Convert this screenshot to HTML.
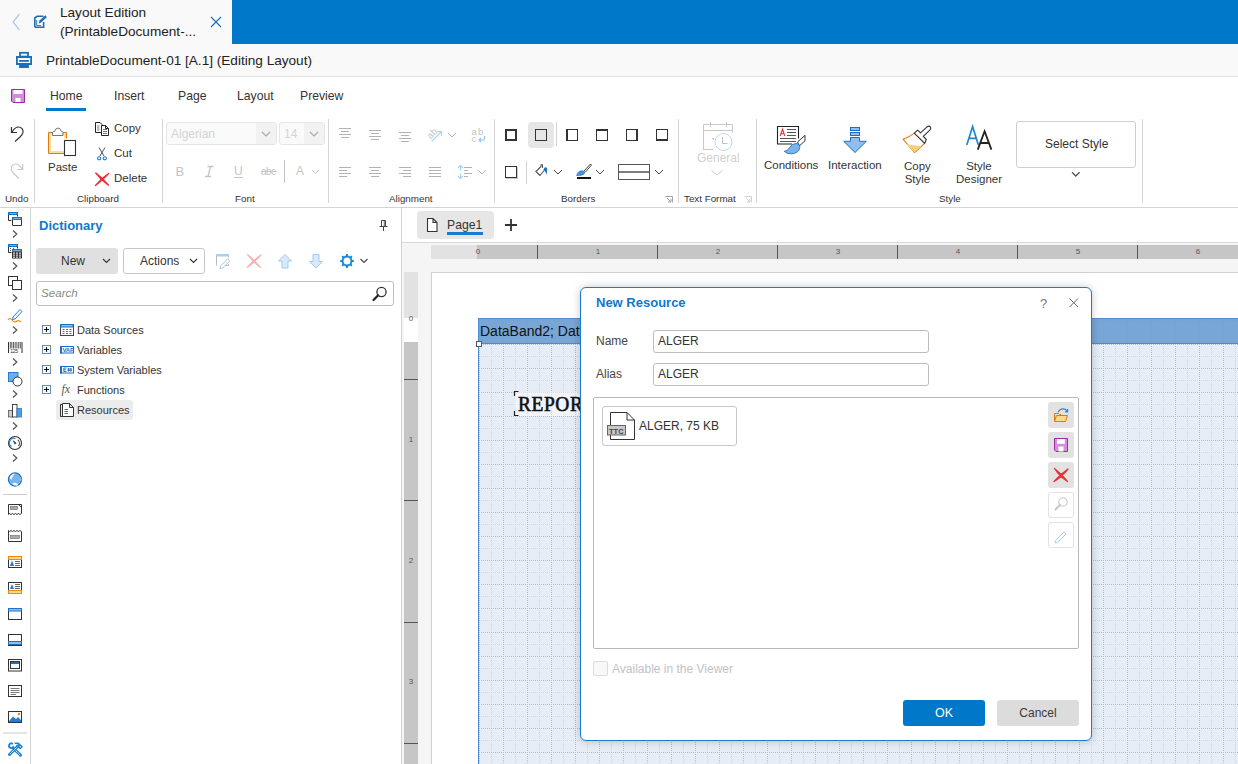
<!DOCTYPE html>
<html><head><meta charset="utf-8">
<style>
*{box-sizing:border-box;margin:0;padding:0}
html,body{width:1238px;height:764px;overflow:hidden;background:#fff;font-family:"Liberation Sans",sans-serif;color:#333}
.a{position:absolute}
svg{position:absolute;overflow:visible}
.t{position:absolute;white-space:nowrap;line-height:1}
.vs{position:absolute;width:1px;background:#d4d4d4}
.gl{position:absolute;top:193px;font-size:9.8px;color:#333;white-space:nowrap;line-height:11px}
</style></head><body>
<!-- top tab bar -->
<div class="a" style="left:0;top:0;width:1238px;height:44px;background:#f9f9f9"></div>
<div class="a" style="left:232px;top:0;width:1006px;height:44px;background:#0078c9"></div>
<!-- back chevron -->
<svg style="left:0;top:0" width="40" height="44"><path d="M19.5 14 L13 22 L19.5 30" fill="none" stroke="#a9cbe8" stroke-width="1.2"/></svg>
<!-- edit icon -->
<svg style="left:0;top:0" width="60" height="44"><path d="M34.8 27.3 V18 L37 16.3 H43.5" fill="none" stroke="#1a6fb5" stroke-width="1.6"/><path d="M34.8 27.3 H43.6 V22" fill="none" stroke="#1a6fb5" stroke-width="1.6"/><path d="M36.7 20 V25.5 H41" fill="none" stroke="#1a6fb5" stroke-width="0.9"/><path d="M38.8 23.5 L39.5 20.5 L45.5 15.3 L46.8 17.3 L40.8 22.8 Z" fill="#1a6fb5"/></svg>
<div class="t" style="left:60px;top:3px;font-size:13.6px;line-height:19px;color:#222">Layout Edition<br>(PrintableDocument-...</div>
<svg style="left:0;top:0" width="232" height="44"><path d="M211 17 L221 27 M221 17 L211 27" stroke="#1a72b8" stroke-width="1.2"/></svg>

<!-- title row -->
<div class="a" style="left:0;top:44px;width:1238px;height:33px;background:#f9f9f9;border-bottom:1px solid #e2e2e2"></div>
<svg style="left:0;top:0" width="40" height="76"><rect x="20" y="52.8" width="8" height="3.8" fill="none" stroke="#1a6fb5" stroke-width="1.8"/><path d="M16 56 H32 V65 H16 Z M17.8 58 V63 H30.2 V58 Z" fill="#1a6fb5" fill-rule="evenodd"/><rect x="19.2" y="60" width="9.7" height="1.8" fill="#1a6fb5"/><rect x="19.1" y="64.5" width="9.8" height="3.5" fill="#1a6fb5"/></svg>
<div class="t" style="left:46px;top:54px;font-size:13.6px;color:#222">PrintableDocument-01 [A.1] (Editing Layout)</div>

<!-- ribbon tabs -->
<svg style="left:11px;top:89px" width="14" height="14"><path d="M0.5 0.5 H13.5 V13.5 H2 L0.5 12 Z" fill="#cf8ed8" stroke="#9b2aa8" stroke-width="1"/><rect x="2.5" y="1" width="9" height="4" fill="#fff"/><rect x="4.5" y="9" width="5" height="4" fill="#fff"/></svg>
<div class="t" style="left:50px;top:90px;font-size:12.2px;color:#333">Home</div>
<div class="a" style="left:46px;top:108px;width:40px;height:3px;background:#0078c9"></div>
<div class="t" style="left:114px;top:90px;font-size:12.2px;color:#333">Insert</div>
<div class="t" style="left:178px;top:90px;font-size:12.2px;color:#333">Page</div>
<div class="t" style="left:237px;top:90px;font-size:12.2px;color:#333">Layout</div>
<div class="t" style="left:300px;top:90px;font-size:12.2px;color:#333">Preview</div>

<!-- ribbon body -->
<div class="a" style="left:0;top:207px;width:1238px;height:1px;background:#d4d4d4"></div>
<div class="vs" style="left:34px;top:119px;height:84px"></div>
<div class="vs" style="left:162px;top:119px;height:84px"></div>
<div class="vs" style="left:328px;top:119px;height:84px"></div>
<div class="vs" style="left:494px;top:119px;height:84px"></div>
<div class="vs" style="left:678px;top:119px;height:84px"></div>
<div class="vs" style="left:756px;top:119px;height:84px"></div>
<div class="vs" style="left:1142px;top:119px;height:84px"></div>
<div class="gl" style="left:5px">Undo</div>
<div class="gl" style="left:77px">Clipboard</div>
<div class="gl" style="left:235px">Font</div>
<div class="gl" style="left:389px">Alignment</div>
<div class="gl" style="left:561px">Borders</div>
<div class="gl" style="left:684px">Text Format</div>
<div class="gl" style="left:939px">Style</div>


<!-- undo/redo -->
<svg style="left:0;top:0" width="34" height="200"><path d="M11.5 127 V132.5 H17" fill="none" stroke="#333" stroke-width="1.2"/><path d="M12 132.2 C14 128.5 16.5 126.8 19 127 C21.8 127.3 23.5 129.8 23 132.5 C22.7 134.2 21.5 135.5 20 137 L15 141.5" fill="none" stroke="#333" stroke-width="1.2"/>
<path d="M22.8 164 V169.5 H17.3" fill="none" stroke="#c6c6c6" stroke-width="1.1"/><path d="M22.3 169.2 C20.3 165.5 17.8 163.8 15.3 164 C12.5 164.3 10.8 166.8 11.3 169.5 C11.6 171.2 12.8 172.5 14.3 174 L19 178.5" fill="none" stroke="#c6c6c6" stroke-width="1.1"/></svg>
<!-- paste -->
<svg style="left:0;top:0" width="160" height="200">
<path d="M66.5 138.5 V132.5 H48.5 V153.5 H64" fill="none" stroke="#e07a10" stroke-width="1"/>
<path d="M65 138.5 V134 H50 V152 H64" fill="none" stroke="#fbe09a" stroke-width="2"/>
<path d="M52.5 135.5 V132 Q53 131.5 54.5 131.5 Q55.5 128 58 128 Q60.5 128 61.5 131.5 Q62.5 131.5 63 132 V135.5 Z" fill="#fff" stroke="#777" stroke-width="1"/>
<rect x="64.5" y="140.5" width="11" height="15" fill="#fff" stroke="#333" stroke-width="1.1"/>
<path d="M95.5 122.5 H100 L102 124.5 V126" fill="none" stroke="#222" stroke-width="1"/><path d="M95.5 122.5 V132.5 H101" fill="none" stroke="#222" stroke-width="1"/>
<path d="M97 126 H99.5 M97 128 H99.5 M97 130 H99.5" stroke="#555" stroke-width="0.8"/>
<path d="M101.5 125.5 H105.5 L108.5 128.5 V135.5 H101.5 Z M105.5 125.5 V128.5 H108.5" fill="#fff" stroke="#222" stroke-width="1"/>
<path d="M103 129.5 H107 M103 131.5 H107 M103 133.5 H107" stroke="#555" stroke-width="0.8"/>
<path d="M99 147.5 L104 156 M105 147.5 L100 156" stroke="#444" stroke-width="0.9"/>
<circle cx="99.2" cy="158.3" r="1.6" fill="none" stroke="#1a7bd0" stroke-width="1.1"/><circle cx="104.8" cy="158.3" r="1.6" fill="none" stroke="#1a7bd0" stroke-width="1.1"/>
<path d="M95.8 173 Q102 177.5 108.5 185.2 Q101 180 95.8 173 Z" fill="#e8323a" stroke="#e8323a" stroke-width="1.4" stroke-linejoin="round"/>
<path d="M108.6 173.5 Q101.5 178 95.5 185.5 Q102.5 180 108.6 173.5 Z" fill="#e8323a" stroke="#e8323a" stroke-width="1.4" stroke-linejoin="round"/>
</svg>
<div class="t" style="left:48px;top:162px;font-size:11.5px;color:#333">Paste</div>
<div class="t" style="left:114px;top:123px;font-size:11.5px;color:#333">Copy</div>
<div class="t" style="left:114px;top:148px;font-size:11.5px;color:#333">Cut</div>
<div class="t" style="left:114px;top:173px;font-size:11.5px;color:#333">Delete</div>
<!-- font -->
<div class="a" style="left:166px;top:122px;width:111px;height:23px;border:1px solid #e6e6e6;border-radius:3px;background:#fafafa"></div>
<div class="a" style="left:256px;top:123px;width:20px;height:21px;background:#f2f2f2;border-radius:0 2px 2px 0"></div>
<div class="t" style="left:171px;top:128px;font-size:12px;color:#d4d4d4">Algerian</div>
<svg style="left:261px;top:131px" width="10" height="6"><path d="M1 1 L5 5 L9 1" fill="none" stroke="#aaa" stroke-width="1.2"/></svg>
<div class="a" style="left:279px;top:122px;width:46px;height:23px;border:1px solid #e6e6e6;border-radius:3px;background:#fafafa"></div>
<div class="a" style="left:304px;top:123px;width:20px;height:21px;background:#f2f2f2;border-radius:0 2px 2px 0"></div>
<div class="t" style="left:284px;top:128px;font-size:12px;color:#d4d4d4">14</div>
<svg style="left:309px;top:131px" width="10" height="6"><path d="M1 1 L5 5 L9 1" fill="none" stroke="#aaa" stroke-width="1.2"/></svg>
<div class="t" style="left:175.5px;top:165px;font-size:13px;color:#c4c4c4">B</div>
<svg style="left:0;top:0" width="230" height="190"><path d="M207.5 166.5 H213.5 M205 176.5 H211 M210.5 166.5 L208 176.5" fill="none" stroke="#c4c4c4" stroke-width="1.3"/></svg>
<div class="t" style="left:234px;top:165px;font-size:12px;color:#c4c4c4">U</div>
<div class="a" style="left:234px;top:177px;width:9px;height:1px;background:#c4c4c4"></div>
<div class="t" style="left:261px;top:166px;font-size:11px;color:#c4c4c4;letter-spacing:-0.6px;transform:scaleX(0.9);transform-origin:left">abc</div>
<div class="a" style="left:261px;top:171px;width:16px;height:1px;background:#c4c4c4"></div>
<div class="a" style="left:284px;top:160px;width:1px;height:23px;background:#c4c4c4"></div>
<div class="t" style="left:296px;top:165px;font-size:12px;color:#c4c4c4">A</div>
<svg style="left:311px;top:169px" width="10" height="6"><path d="M1 1 L4.5 4.5 L8 1" fill="none" stroke="#c4c4c4" stroke-width="1"/></svg>
<!-- alignment -->
<svg style="left:0;top:0" width="500" height="200">
<g stroke="#b2b2b2" stroke-width="1">
<path d="M339 128.5 H351 M341 131.5 H349 M339 134.5 H351 M341 137.5 H349"/>
<path d="M369 130.5 H381 M371 133.5 H379 M369 136.5 H381 M371 139.5 H379"/>
<path d="M399 132.5 H411 M401 135.5 H409 M399 138.5 H411 M401 141.5 H409"/>
<path d="M339 167.5 H351 M339 170.5 H347 M339 173.5 H351 M339 176.5 H347"/>
<path d="M369 167.5 H381 M371 170.5 H379 M369 173.5 H381 M371 176.5 H379"/>
<path d="M399 167.5 H411 M403 170.5 H411 M399 173.5 H411 M403 176.5 H411"/>
<path d="M429 167.5 H441 M429 170.5 H441 M429 173.5 H441 M429 176.5 H441"/>
<path d="M464 167.5 H472 M464 170.5 H468 M464 173.5 H472 M464 176.5 H468"/>
<path d="M448 133 L452 137 L456 133 M478 170 L482 174 L486 170" fill="none"/>
</g>
<path d="M431.5 141.5 L441.5 131.5 M437 131.5 H441.5 V136" fill="none" stroke="#a8d2f0" stroke-width="1.1"/>
<text x="0" y="0" font-size="9.5" fill="#c4c4c4" font-family="Liberation Sans" transform="translate(430.5 139.5) rotate(-45)">ab</text>
<text x="471.5" y="134.5" font-size="9.5" fill="#c4c4c4" font-family="Liberation Sans" letter-spacing="1.2">ab</text>
<text x="471.5" y="142" font-size="9.5" fill="#c4c4c4" font-family="Liberation Sans">c</text>
<path d="M484.5 136 V138.5 Q484.5 140 483 140 H479 M481 138 L479 140 L481 142" fill="none" stroke="#8cc4ee" stroke-width="1.1"/>
<path d="M460.5 166 V171 M458 168 L460.5 165.5 L463 168 M460.5 173.5 V178.5 M458 176 L460.5 178.5 L463 176" fill="none" stroke="#a8d2f0" stroke-width="1.1"/>
</svg>
<!-- borders -->
<div class="a" style="left:528px;top:122px;width:26px;height:26px;background:#e6e6e6;border-radius:4px"></div>
<div class="a" style="left:556px;top:122px;width:1px;height:24px;background:#d0d0d0"></div>
<div class="a" style="left:526px;top:161px;width:1px;height:23px;background:#d0d0d0"></div>
<svg style="left:0;top:0" width="700" height="200">
<g fill="none" stroke="#333">

<rect x="618.5" y="164.5" width="31" height="15" stroke-width="1" stroke="#555"/><path d="M618 172 H650" stroke-width="1.5" stroke="#555"/>
<path d="M554 170 L558 174 L562 170 M596 170 L600 174 L604 170 M655 170 L659 174 L663 170" stroke="#444" stroke-width="1"/>

</g>
<path d="M536 171.5 L541 166.5 M541 166.5 V164.8 H542.5 V168 M544.5 170 L540 175.5 L535.5 171" fill="none" stroke="#555" stroke-width="1.1" stroke-linejoin="round"/>
<path d="M543.5 169.5 Q544.5 166.5 546.5 167.5 Q547.8 168.5 547 171 L546.5 175 Q545.5 171 543.5 169.5 Z" fill="#1a6fc0"/>
<rect x="577" y="177" width="14" height="2" fill="#111"/>
<path d="M584 171 L590.5 164 L591.5 165 L585.5 172" fill="#fff" stroke="#444" stroke-width="1"/>
<path d="M576.5 175.5 Q577.5 172 580 171 Q583 170 585 172 Q584.5 175 580.5 175.5 Z" fill="#4a90e2" stroke="#2a70c0" stroke-width="0.6"/>
<path d="M665.5 196.5 H672.5 V202.5 M667 198 L671 202 M668 202 H671 V199" fill="none" stroke="#999" stroke-width="0.9"/>
<path d="M744.5 196.5 H751.5 V202.5 M746 198 L750 202 M747 202 H750 V199" fill="none" stroke="#ccc" stroke-width="0.9"/>
</svg>
<div class="a" style="left:505px;top:129px;width:12px;height:12px;border:2px solid #333"></div>
<div class="a" style="left:535px;top:129px;width:12px;height:12px;border:1px solid #333;border-width:1.5px"></div>
<div class="a" style="left:566px;top:129px;width:12px;height:12px;border:1px solid #333;border-left-width:2px"></div>
<div class="a" style="left:596px;top:129px;width:12px;height:12px;border:1px solid #333;border-top-width:2px"></div>
<div class="a" style="left:626px;top:129px;width:12px;height:12px;border:1px solid #333;border-right-width:2px"></div>
<div class="a" style="left:656px;top:129px;width:12px;height:12px;border:1px solid #333;border-bottom-width:2px"></div>
<div class="a" style="left:505px;top:166px;width:12px;height:12px;border:1px solid #333;box-shadow:1px 1px 0 #ccc"></div>
<!-- text format -->
<svg style="left:0;top:0" width="760" height="200">
<g fill="none" stroke="#c8c8c8" stroke-width="1">
<path d="M703.5 150 V124.5 H732.5 V133"/><path d="M703.5 130.5 H732.5"/><path d="M710.5 122 V127 M726.5 122 V127"/><path d="M703.5 149.5 H713"/>
</g>
<circle cx="723.5" cy="142" r="8.5" fill="#fff" stroke="#b8daf4" stroke-width="1"/>
<path d="M722.5 137 V143.5 H727.5" fill="none" stroke="#c0c0c0" stroke-width="1"/>
<rect x="712.5" y="138" width="1.3" height="1.3" fill="#999"/>
<path d="M711.5 170.5 L717 175 L722.5 170.5" fill="none" stroke="#ccc" stroke-width="1"/>
</svg>
<div class="t" style="left:697px;top:152px;font-size:12px;color:#d0d0d0">General</div>
<!-- style group -->
<svg style="left:0;top:0" width="1000" height="200">
<path d="M798.5 138.5 V126.5 H777.5 V144 H792" fill="#fff" stroke="#222" stroke-width="1.1"/>
<path d="M780.2 136 L782.5 129.3 L784.8 136 M781 133.8 H784" fill="none" stroke="#e8323a" stroke-width="1.1"/>
<path d="M787 129.5 H796 M787 132.5 H796 M787 135.5 H796 M780 138.5 H796 M780 141.5 H796" stroke="#555" stroke-width="1"/>
<path d="M797.5 142 L805 135.3 V140.8 L799.5 145.8 Z" fill="#fff" stroke="#333" stroke-width="1"/>
<path d="M784.2 151.3 Q787.5 151.5 789.5 147.5 Q792 143.5 796 143.5 Q800 144 799.8 147.5 Q799 153.5 791 153.8 Q786.5 153.8 784.2 151.3 Z" fill="#7ab4ea" stroke="#2a70c2" stroke-width="0.9"/>
<rect x="850.5" y="127.5" width="9" height="3" fill="#8cc0f0" stroke="#1a6fc0" stroke-width="1"/>
<rect x="850.5" y="132.5" width="9" height="3" fill="#8cc0f0" stroke="#1a6fc0" stroke-width="1"/>
<path d="M850.5 137.5 H859.5 V141.3 H866.3 L855 152.5 L843.7 141.3 H850.5 Z" fill="#8cc0f0" stroke="#1a6fc0" stroke-width="1"/>
<path d="M914.3 133.1 Q909 137.5 903 139.2 L914.5 152.5 L924.7 143.3 Z" fill="#fff" stroke="#e07a10" stroke-width="1.1" stroke-linejoin="round"/>
<path d="M906.5 144.2 Q914 145 921.5 146.3 L914.5 152.3 Z" fill="#f8d27a"/>
<path d="M914.3 133.1 L917.6 130.1 L920.5 132.8 L927 126.8 Q929 125.3 930.6 127.2 Q931.3 128.8 929.8 130.2 L923.3 136.3 L926.3 139.5 L924.7 143.3 Z" fill="#fff" stroke="#333" stroke-width="1.1" stroke-linejoin="round"/>
<path d="M966.8 145 L972.6 126.5 L978.4 145 M969 138.3 H976.2" fill="none" stroke="#1f86d4" stroke-width="1.7"/>
<path d="M977.8 149.6 L984.6 131.3 L991.4 149.6 M980.3 143 H989" fill="none" stroke="#222" stroke-width="1.8"/>
<path d="M1072 172.3 L1075.8 176 L1079.6 172.3" fill="none" stroke="#555" stroke-width="1.3"/>
</svg>
<div class="t" style="left:764px;top:160px;font-size:11.5px;color:#333">Conditions</div>
<div class="t" style="left:828px;top:160px;font-size:11.5px;color:#333">Interaction</div>
<div class="t" style="left:904px;top:160px;font-size:11.5px;color:#333;text-align:center;line-height:13px">Copy<br>Style</div>
<div class="t" style="left:956px;top:160px;font-size:11.5px;color:#333;text-align:center;width:46px;line-height:13px">Style<br>Designer</div>
<div class="a" style="left:1016px;top:121px;width:120px;height:47px;border:1px solid #cfcfcf;border-radius:3px"></div>
<div class="t" style="left:1045px;top:138px;font-size:12px;color:#333">Select Style</div>


<!-- left toolbar -->
<div class="a" style="left:30px;top:208px;width:1px;height:556px;background:#d4d4d4"></div>
<svg style="left:0;top:0" width="31" height="764">
<g fill="none" stroke="#444" stroke-width="1">
<path d="M13 230.5 L16.8 234 L13 237.5 M13 262.5 L16.8 266 L13 269.5 M13 294.5 L16.8 298 L13 301.5 M13 326.5 L16.8 330 L13 333.5 M13 358.5 L16.8 362 L13 365.5 M13 390.5 L16.8 394 L13 397.5 M13 422.5 L16.8 426 L13 429.5 M13 454.5 L16.8 458 L13 461.5" fill="none" stroke="#555" stroke-width="1.2"/>
</g>
<!-- 1 windows -->
<rect x="8" y="212" width="10" height="3" fill="#1a72c4"/><rect x="9.5" y="213.1" width="7" height="0.8" fill="#8cc0ee"/>
<path d="M8.5 215 V220.5 H11.5 M17.5 215 V216.5" fill="none" stroke="#333" stroke-width="1"/>
<rect x="12" y="217" width="10" height="3" fill="#1a72c4"/><rect x="13.5" y="218.1" width="7" height="0.8" fill="#8cc0ee"/>
<path d="M12.5 220 V225.5 H21.5 V220" fill="none" stroke="#333" stroke-width="1"/>
<!-- 2 -->
<rect x="8" y="244" width="10" height="3" fill="#1a72c4"/><rect x="9.5" y="245.1" width="7" height="0.8" fill="#8cc0ee"/>
<path d="M8.5 247 V252.5 H11.5 M17.5 247 V248.5" fill="none" stroke="#333" stroke-width="1"/><rect x="10" y="248" width="1" height="1" fill="#555"/><rect x="13" y="248" width="1" height="1" fill="#555"/><rect x="10" y="250" width="1" height="1" fill="#555"/>
<rect x="12" y="249" width="10" height="3" fill="#1a72c4"/><rect x="13.5" y="250.1" width="7" height="0.8" fill="#8cc0ee"/>
<rect x="12" y="252" width="10" height="6.5" fill="#333"/>
<rect x="13" y="252.6" width="2" height="1" fill="#fff"/><rect x="16" y="252.6" width="2" height="1" fill="#fff"/><rect x="19" y="252.6" width="2" height="1" fill="#fff"/><rect x="13" y="254.6" width="2" height="1" fill="#fff"/><rect x="16" y="254.6" width="2" height="1" fill="#fff"/><rect x="19" y="254.6" width="2" height="1" fill="#fff"/><rect x="13" y="256.6" width="2" height="1" fill="#fff"/><rect x="16" y="256.6" width="2" height="1" fill="#fff"/><rect x="19" y="256.6" width="2" height="1" fill="#fff"/>
<!-- 3 -->
<rect x="8.5" y="276.5" width="9" height="9" fill="#fff" stroke="#333"/><rect x="12.5" y="280.5" width="9" height="9" fill="#fff" stroke="#333"/>
<!-- 4 pen -->
<path d="M13 317 L20 309.5 L22 311.5 L15 319 L12.5 319.5 Z" fill="#fff" stroke="#2a7bd0" stroke-width="1"/>
<path d="M8 320 Q10 317 12 320 Q14 323 17 321 Q19 320 21 322" fill="none" stroke="#e8891a" stroke-width="1.2"/>
<!-- 5 barcode -->
<path d="M8.5 342 V353 M22 342 V353" stroke="#333" stroke-width="1"/>
<path d="M10.3 342 V348.5 M11.8 342 V348.5 M13.5 342 V348.5 M15.2 342 V348.5 M16.9 342 V348.5 M18.7 342 V348.5 M20.3 342 V348.5" stroke="#333" stroke-width="0.8"/>
<text x="10.2" y="353.3" font-size="5" fill="#333" font-family="Liberation Sans" letter-spacing="-0.2">125</text>
<!-- 6 shapes -->
<rect x="8.5" y="372.5" width="9.5" height="9" fill="#6aaeea" stroke="#2a7bd0" stroke-width="1"/>
<circle cx="17.5" cy="381.5" r="4.5" fill="#fff" stroke="#333" stroke-width="1"/>
<!-- 7 chart -->
<rect x="8.5" y="410.5" width="4" height="6.5" fill="#ccc" stroke="#555" stroke-width="0.8"/>
<rect x="12.5" y="404.5" width="4.5" height="12.5" fill="#fff" stroke="#333" stroke-width="0.9"/>
<rect x="17" y="408.5" width="4.5" height="8.5" fill="#4a9ee6" stroke="#2a7bd0" stroke-width="0.8"/>
<!-- 8 gauge -->
<circle cx="15" cy="443" r="6.5" fill="#fff" stroke="#333" stroke-width="1.1"/>
<path d="M11.5 446.5 A4.5 4.5 0 0 1 15.5 438.5" fill="none" stroke="#2a86d8" stroke-width="1.1"/>
<path d="M17.8 439.8 A4.5 4.5 0 0 1 18.5 446" fill="none" stroke="#444" stroke-width="1.1"/>
<path d="M13.3 440.8 L16.2 443 L15 444.2 Z" fill="#333" stroke="#333" stroke-width="0.6"/>
<!-- 9 globe -->
<circle cx="15" cy="479.5" r="6.6" fill="#7ab4ea" stroke="#1a6fc0" stroke-width="1.1"/>
<path d="M9.6 477.5 Q11 474 15 473.3 Q12.5 476 11.5 479.5 Q10 479.5 9.6 477.5 Z" fill="#fff" opacity="0.9"/>
<path d="M12 483.5 Q15 482 17.5 484 Q19 485.5 16.5 485.8 Q13.5 485.8 12 483.5 Z" fill="#fff" opacity="0.9"/>
<path d="M20.8 477 Q21.8 479 21.2 481.5 Q20 479.5 20.8 477 Z" fill="#fff" opacity="0.8"/>
<path d="M3 494.5 H27" stroke="#ccc" stroke-width="1"/>
<!-- bands -->
<g fill="#fff" stroke="#333" stroke-width="1">
<path d="M8.5 504.5 H21.5 V513.5 L20 514.5 L18.5 513.5 L17 514.5 L15.5 513.5 L14 514.5 L12.5 513.5 L11 514.5 L9.5 513.5 L8.5 514.5 Z"/>
<rect x="10.5" y="506.5" width="7" height="3" fill="#aaa" stroke="#666" stroke-width="0.6"/><path d="M18.5 504.5 L21.5 507.5" stroke="#333" stroke-width="1"/>
<path d="M8.5 530.5 L9.5 531.5 L11 530.5 L12.5 531.5 L14 530.5 L15.5 531.5 L17 530.5 L18.5 531.5 L20 530.5 L21.5 531.5 V541.5 H8.5 Z"/>
<rect x="10.5" y="535.5" width="9" height="3" fill="#aaa" stroke="#666" stroke-width="0.6"/>
<rect x="8.5" y="556.5" width="13" height="11"/>
<rect x="8.5" y="582.5" width="13" height="11"/>
<rect x="8.5" y="608.5" width="13" height="11"/>
<rect x="8.5" y="634.5" width="13" height="11"/>
<rect x="8.5" y="659.5" width="13" height="11.5"/>
<rect x="8.5" y="685.5" width="13" height="11"/>
<rect x="8.5" y="711.5" width="13" height="11"/>
</g>
<rect x="8.5" y="556.5" width="13" height="3" fill="#fbd88a" stroke="#e8891a" stroke-width="1"/>
<path d="M10 565.5 L12 560.5 L14 565.5 Z" fill="#2a7bd0"/><path d="M10 565.5 H14" stroke="#2a7bd0" stroke-width="1"/>
<path d="M15 561.5 H20 M15 563.5 H20 M15 565.5 H20" stroke="#555" stroke-width="0.9"/>
<rect x="8.5" y="590.5" width="13" height="3" fill="#fbd88a" stroke="#e8891a" stroke-width="1"/>
<path d="M10 589 L12 584 L14 589 Z" fill="#2a7bd0"/>
<path d="M15 584.5 H20 M15 586.5 H20 M15 588.5 H20" stroke="#555" stroke-width="0.9"/>
<rect x="8.5" y="608.5" width="13" height="2.5" fill="#8cc0ee" stroke="#1a72c4" stroke-width="1"/>
<rect x="8.5" y="641.5" width="13" height="3" fill="#8cc0ee" stroke="#1a72c4" stroke-width="1"/>
<rect x="10.5" y="661.5" width="9" height="7" fill="#fff" stroke="#333" stroke-width="1"/><rect x="11" y="662" width="8" height="2" fill="#1a72c4"/>
<path d="M10.5 688.5 H19.5 M10.5 690.5 H19.5 M10.5 692.5 H19.5 M10.5 694.5 H16" stroke="#555" stroke-width="0.8"/>
<path d="M9 721 L13 716.5 L16 719 L18 717 L21 720 V722 H9 Z" fill="#2a7bd0"/>
<circle cx="19" cy="714" r="1.2" fill="#e8891a"/>
<path d="M3 733 H27" stroke="#ccc" stroke-width="1"/>
<g fill="none" stroke-linecap="round">
<path d="M13 748 L20.5 755.2" stroke="#1e86d0" stroke-width="3"/>
<path d="M14.5 749.5 L19.5 754.3" stroke="#fff" stroke-width="0.8" stroke-dasharray="1 1.2"/>
<path d="M12.3 743.6 A2.3 2.3 0 1 0 13.2 747" stroke="#1e86d0" stroke-width="1.8"/>
<path d="M9.5 754.5 L18.5 745.5" stroke="#1e86d0" stroke-width="3"/>
<path d="M10.5 753.5 L17.5 746.5" stroke="#fff" stroke-width="0.8" stroke-dasharray="1 1.2"/>
<path d="M15.2 743.2 H18.3 L22 746.8 L20.3 748.5 L17 745.5" stroke="#1e86d0" stroke-width="1.6" stroke-linejoin="round"/>
</g>
</svg>

<!-- dictionary panel -->
<div class="a" style="left:401px;top:208px;width:1px;height:556px;background:#d4d4d4"></div>
<div class="t" style="left:39px;top:219px;font-size:13px;font-weight:bold;color:#0f78cc">Dictionary</div>
<svg style="left:0;top:0" width="400" height="240"><path d="M381.5 220.5 H385.5 V226 M381.5 220.5 V226" fill="none" stroke="#444" stroke-width="1"/><path d="M379.5 226.5 H387.5" stroke="#444" stroke-width="1"/><path d="M383.5 226.5 V231" stroke="#444" stroke-width="1"/><path d="M384.3 221 V226" stroke="#444" stroke-width="0.8"/></svg>
<div class="a" style="left:36px;top:248px;width:82px;height:26px;background:#e0e0e0;border-radius:3px"></div>
<div class="t" style="left:61px;top:255px;font-size:12px;color:#333">New</div>
<svg style="left:102px;top:258px" width="10" height="6"><path d="M1 1 L4.5 4.5 L8 1" fill="none" stroke="#333" stroke-width="1.1"/></svg>
<div class="a" style="left:123px;top:248px;width:82px;height:26px;border:1px solid #c6c6c6;border-radius:3px;background:#fff"></div>
<div class="t" style="left:140px;top:255px;font-size:12px;color:#333">Actions</div>
<svg style="left:189px;top:258px" width="10" height="6"><path d="M1 1 L4.5 4.5 L8 1" fill="none" stroke="#333" stroke-width="1.1"/></svg>
<svg style="left:0;top:0" width="400" height="300">
<path d="M216.5 265.5 V254.5 H228.5 V257.5 M228.5 264 V265.5 H224" fill="none" stroke="#b8b8b8" stroke-width="1"/><rect x="216" y="254" width="13" height="2.5" fill="#a8d0f0"/>
<path d="M220.8 265.8 L227.8 258.8 L229.8 260.8 L222.8 267.8 L220 268.6 Z" fill="#fff" stroke="#9ccbee" stroke-width="1"/>
<path d="M247.5 254.5 Q254 260 260.5 267.5 Q253 262 247.5 254.5 Z M261 255 Q254 259.5 247.3 267.5 Q254.5 262 261 255 Z" fill="#f6b0b2" stroke="#f6b0b2" stroke-width="1.2" stroke-linejoin="round"/>
<path d="M285 254.5 L291.5 261 H288 V268 H282 V261 H278.5 Z" fill="#dbeafa" stroke="#9ccbee" stroke-width="1"/>
<path d="M316 268 L322.5 261.5 H319 V254.5 H313 V261.5 H309.5 Z" fill="#dbeafa" stroke="#9ccbee" stroke-width="1"/>
<path d="M352.39 259.93 L353.96 260.23 L353.96 261.77 L352.39 262.07 L351.57 264.06 L352.46 265.38 L351.38 266.46 L350.06 265.57 L348.07 266.39 L347.77 267.96 L346.23 267.96 L345.93 266.39 L343.94 265.57 L342.62 266.46 L341.54 265.38 L342.43 264.06 L341.61 262.07 L340.04 261.77 L340.04 260.23 L341.61 259.93 L342.43 257.94 L341.54 256.62 L342.62 255.54 L343.94 256.43 L345.93 255.61 L346.23 254.04 L347.77 254.04 L348.07 255.61 L350.06 256.43 L351.38 255.54 L352.46 256.62 L351.57 257.94 Z M350.5 261 A3.5 3.5 0 1 0 343.5 261 A3.5 3.5 0 1 0 350.5 261 Z" fill="#1e86d0" fill-rule="evenodd"/>
<path d="M360.5 259 L364 262.5 L367.5 259" fill="none" stroke="#444" stroke-width="1.1"/>
</svg>
<div class="a" style="left:36px;top:281px;width:358px;height:25px;border:1px solid #bdbdbd;border-radius:3px;background:#fff"></div>
<div class="t" style="left:41px;top:287px;font-size:11.6px;font-style:italic;color:#888">Search</div>
<svg style="left:372px;top:286px" width="16" height="16"><circle cx="9.5" cy="6" r="4.6" fill="none" stroke="#333" stroke-width="1.3"/><path d="M6.2 9.3 L1.5 14" stroke="#222" stroke-width="2.2" stroke-linecap="round"/></svg>
<!-- tree -->
<svg style="left:0;top:0" width="200" height="430">
<g fill="#fff" stroke="#6a8cb0" stroke-width="1">
<rect x="42.5" y="325.5" width="8" height="8"/><rect x="42.5" y="345.5" width="8" height="8"/><rect x="42.5" y="365.5" width="8" height="8"/><rect x="42.5" y="385.5" width="8" height="8"/>
</g>
<path d="M44 329.5 H49 M46.5 327 V332 M44 349.5 H49 M46.5 347 V352 M44 369.5 H49 M46.5 367 V372 M44 389.5 H49 M46.5 387 V392" stroke="#111" stroke-width="1.1"/>
<rect x="60.5" y="324.5" width="13" height="11" fill="#fff" stroke="#444" stroke-width="1"/><rect x="60" y="324" width="14" height="3.5" fill="#1a72c4"/><rect x="61.5" y="325" width="11" height="1.5" fill="#8cc0ee"/>
<g fill="#666"><rect x="62.5" y="329" width="2" height="1"/><rect x="66" y="329" width="2" height="1"/><rect x="69.5" y="329" width="2" height="1"/><rect x="62.5" y="331" width="2" height="1"/><rect x="66" y="331" width="2" height="1"/><rect x="69.5" y="331" width="2" height="1"/><rect x="62.5" y="333" width="2" height="1"/><rect x="66" y="333" width="2" height="1"/><rect x="69.5" y="333" width="2" height="1"/></g>
<rect x="60.5" y="346.5" width="13" height="6.5" fill="#fff" stroke="#1a6fc0" stroke-width="1"/><rect x="60" y="346" width="2" height="7.5" fill="#1a6fc0"/>
<text x="62.6" y="352.3" font-size="6" font-weight="bold" fill="#1a6fc0" font-family="Liberation Sans" letter-spacing="-0.3">VAR</text>
<rect x="60.5" y="366.5" width="13" height="6.5" fill="#fff" stroke="#1a6fc0" stroke-width="1"/><rect x="60" y="366" width="2" height="7.5" fill="#1a6fc0"/>
<path d="M66.5 368 H63.8 V371.5 H66.5 M63.8 369.8 H66 M68.5 368 V371.5 M70.8 368 V371.5 M67.5 369 H72 M67.5 370.6 H72" fill="none" stroke="#1a6fc0" stroke-width="0.9"/>
<text x="61.5" y="393" font-size="12" font-style="italic" fill="#555" font-family="Liberation Serif">fx</text>
<rect x="56" y="400" width="77" height="20" rx="3" fill="#ececec"/>
<path d="M63.5 416.5 H60.5 V404.5 H64" fill="none" stroke="#333" stroke-width="1"/>
<path d="M62.5 403.5 H69.5 L73.5 407.5 V416.5 H62.5 Z M69.5 403.5 V407.5 H73.5" fill="#fff" stroke="#333" stroke-width="1"/>
<path d="M64.5 409.5 H68 M64.5 411.5 H68 M64.5 413.5 H68" stroke="#555" stroke-width="0.9"/>
</svg>
<div class="t" style="left:77px;top:325px;font-size:11px;color:#333">Data Sources</div>
<div class="t" style="left:77px;top:345px;font-size:11px;color:#333">Variables</div>
<div class="t" style="left:77px;top:365px;font-size:11px;color:#333">System Variables</div>
<div class="t" style="left:77px;top:385px;font-size:11px;color:#333">Functions</div>
<div class="t" style="left:77px;top:405px;font-size:11px;color:#333">Resources</div>

<!-- DICT -->

<!-- canvas -->
<div class="a" style="left:402px;top:242px;width:836px;height:522px;background:#f5f5f5;border-top:1px solid #d8d8d8"></div>
<div class="a" style="left:417px;top:211px;width:77px;height:28px;background:#e6e6e6;border-radius:4px"></div>
<svg style="left:0;top:0" width="440" height="240"><path d="M427.5 218.5 H433 L437 222.5 V231.5 H427.5 Z M433 218.5 V222.5 H437" fill="#fff" stroke="#333" stroke-width="1.1"/></svg>
<div class="t" style="left:447px;top:219px;font-size:12.2px;color:#333">Page1</div>
<div class="a" style="left:447px;top:232px;width:36px;height:3px;background:#1a7bd0"></div>
<svg style="left:504px;top:218px" width="14" height="14"><path d="M7 1 V13 M1 7 H13" stroke="#333" stroke-width="1.8"/></svg>
<!-- h ruler -->
<div class="a" style="left:431px;top:245px;width:807px;height:14px;background:#c6c6c6"></div>
<div class="a" style="left:431px;top:245px;width:46px;height:14px;background:#e2e2e2"></div>
<svg style="left:0;top:0" width="1238" height="764">
<g stroke="#555" stroke-width="1"><path d="M537.5 245 V259 M657.5 245 V259 M777.5 245 V259 M897.5 245 V259 M1017.5 245 V259 M1137.5 245 V259"/></g>
<g font-size="8" fill="#555" font-family="Liberation Sans" text-anchor="middle">
<text x="478" y="254">0</text><text x="598" y="254">1</text><text x="718" y="254">2</text><text x="838" y="254">3</text><text x="958" y="254">4</text><text x="1078" y="254">5</text><text x="1198" y="254">6</text>
</g>
</svg>
<!-- v ruler -->
<div class="a" style="left:404px;top:272px;width:14px;height:492px;background:#c6c6c6"></div>
<div class="a" style="left:404px;top:272px;width:14px;height:46px;background:#e2e2e2"></div>
<div class="a" style="left:404px;top:318px;width:14px;height:24px;background:#fff"></div>
<svg style="left:0;top:0" width="1238" height="764">
<g stroke="#555" stroke-width="1"><path d="M404 379.5 H418 M404 500.5 H418 M404 622.5 H418 M404 743.5 H418"/></g>
<g font-size="8" fill="#555" font-family="Liberation Sans" text-anchor="middle">
<text x="411" y="321">0</text><text x="411" y="442">1</text><text x="411" y="563">2</text><text x="411" y="684">3</text>
</g>
</svg>
<!-- page -->
<div class="a" style="left:431px;top:272px;width:807px;height:492px;background:#fff;border-left:1px solid #d0d0d0;border-top:1px solid #d0d0d0"></div>
<svg style="left:0;top:0" width="1238" height="764">
<defs><pattern id="grid" width="24" height="24" patternUnits="userSpaceOnUse" x="491" y="356">
<path d="M0.5 0 V24 M0 0.5 H24" stroke="#cfd6e1" stroke-width="1" stroke-dasharray="1 1"/>
<path d="M12.5 0 V24 M0 12.5 H24" stroke="#b4bdca" stroke-width="1" stroke-dasharray="1 1"/>
</pattern></defs>
<rect x="478" y="318" width="760" height="446" fill="#e7edf7"/>
<rect x="479" y="318" width="759" height="446" fill="url(#grid)"/>
<rect x="478" y="318" width="760" height="26" fill="#6fa0d3" fill-opacity="0.93"/>
<path d="M478 318.5 H1238 M478 343.5 H1238" stroke="#5489c8" stroke-width="1"/>
<path d="M478.5 318 V764" stroke="#4a8ad0" stroke-width="1"/>
</svg>
<div class="t" style="left:480px;top:324px;font-size:14px;color:#111">DataBand2; Dat</div>
<div class="a" style="left:476px;top:341px;width:6px;height:6px;background:#fff;border:1px solid #555"></div>
<div class="a" style="left:515px;top:392px;width:70px;height:24px;background:rgba(255,255,255,0.45)"></div>
<div class="t" style="left:518px;top:394px;font-size:20px;font-weight:normal;color:#111;font-family:'Liberation Serif',serif;letter-spacing:0.6px;transform:scaleX(0.97);-webkit-text-stroke:0.6px #111;transform-origin:left">REPORT</div>
<svg style="left:0;top:0" width="1238" height="764"><path d="M518.5 391.5 H514.5 V396 M514.5 411 V415.5 H518.5" fill="none" stroke="#222" stroke-width="1.2"/></svg>

<!-- dialog -->
<div class="a" style="left:580px;top:287px;width:512px;height:454px;background:#fff;border:1px solid #1a7bd0;border-radius:6px;box-shadow:0 0 8px rgba(0,0,0,0.22)"></div>
<div class="t" style="left:596px;top:296px;font-size:13px;font-weight:bold;color:#0f78cc">New Resource</div>
<div class="t" style="left:1040px;top:297px;font-size:13px;color:#777">?</div>
<svg style="left:0;top:0" width="1238" height="764"><path d="M1069.5 298.5 L1078 307 M1078 298.5 L1069.5 307" stroke="#666" stroke-width="1"/></svg>
<div class="t" style="left:596px;top:335px;font-size:12px;color:#444">Name</div>
<div class="a" style="left:653px;top:330px;width:276px;height:23px;border:1px solid #bdbdbd;border-radius:3px"></div>
<div class="t" style="left:658px;top:335px;font-size:12px;color:#333">ALGER</div>
<div class="t" style="left:596px;top:368px;font-size:12px;color:#444">Alias</div>
<div class="a" style="left:653px;top:363px;width:276px;height:23px;border:1px solid #bdbdbd;border-radius:3px"></div>
<div class="t" style="left:658px;top:368px;font-size:12px;color:#333">ALGER</div>
<div class="a" style="left:593px;top:397px;width:486px;height:252px;border:1px solid #b8b8b8;border-radius:2px"></div>
<div class="a" style="left:602px;top:406px;width:135px;height:40px;border:1px solid #c8c8c8;border-radius:3px"></div>
<svg style="left:0;top:0" width="1238" height="764">
<path d="M610.5 412.5 H627 L634.5 420 V439.5 H610.5 Z M627 412.5 V420 H634.5" fill="#fff" stroke="#333" stroke-width="1"/>
<rect x="607.5" y="425.5" width="18" height="9.5" fill="#c8c8c8" stroke="#666" stroke-width="1"/>
<text x="609" y="433.5" font-size="7.5" font-weight="bold" fill="#444" font-family="Liberation Sans">TTC</text>
</svg>
<div class="t" style="left:639px;top:420px;font-size:12px;color:#333">ALGER, 75 KB</div>
<div class="a" style="left:1048px;top:402px;width:26px;height:26px;background:#e2e2e2;border-radius:3px"></div>
<div class="a" style="left:1048px;top:432px;width:26px;height:26px;background:#e2e2e2;border-radius:3px"></div>
<div class="a" style="left:1048px;top:462px;width:26px;height:26px;background:#e2e2e2;border-radius:3px"></div>
<div class="a" style="left:1048px;top:492px;width:26px;height:26px;border:1px solid #e2e2e2;border-radius:3px"></div>
<div class="a" style="left:1048px;top:522px;width:26px;height:26px;border:1px solid #e2e2e2;border-radius:3px"></div>
<svg style="left:0;top:0" width="1238" height="764">
<path d="M1054.5 421.5 V413.5 H1058.5 L1059.5 414.5 H1061" fill="none" stroke="#e07a10" stroke-width="1"/>
<path d="M1054.5 421.5 L1056.5 415.5 H1067.5 L1065.5 421.5 Z" fill="#fbd88a" stroke="#e07a10" stroke-width="1" stroke-linejoin="round"/>
<path d="M1058 412.3 Q1059.8 408.8 1063 408.8 Q1066 408.8 1067 411.5" fill="none" stroke="#2a86d8" stroke-width="1.2"/><path d="M1065 411.8 H1067.6 V409" fill="none" stroke="#2a86d8" stroke-width="1.2"/>
<path d="M1054.5 438.5 H1067.5 V451.5 H1056 L1054.5 450 Z" fill="#d490dc" stroke="#9b2aa8" stroke-width="1"/><rect x="1057" y="439" width="7.8" height="4.8" fill="#fff"/><rect x="1058.5" y="446.5" width="5" height="5" fill="#fff"/>
<path d="M1054.5 468.5 Q1061 473.5 1067.5 481.5 Q1060 477 1054.5 468.5 Z M1068 469 Q1060.5 474 1054 481.5 Q1061.5 477 1068 469 Z" fill="#e8323a" stroke="#e8323a" stroke-width="1.3" stroke-linejoin="round"/>
<circle cx="1063" cy="502" r="4.2" fill="none" stroke="#c4c4c4" stroke-width="1.1"/><path d="M1060 505 L1055.5 509.5" stroke="#c4c4c4" stroke-width="1.8" stroke-linecap="round"/>
<path d="M1055.5 540.5 L1064 532 L1066 534 L1057.5 542.5 L1055 543 Z" fill="none" stroke="#a8d0f0" stroke-width="1"/>
</svg>
<div class="a" style="left:593px;top:661px;width:15px;height:15px;border:1px solid #dcdcdc;border-radius:2px;background:#f8f8f8"></div>
<div class="t" style="left:612px;top:663px;font-size:12px;color:#c2c2c6">Available in the Viewer</div>
<div class="a" style="left:903px;top:700px;width:82px;height:26px;background:#0078c9;border-radius:3px"></div>
<div class="t" style="left:903px;top:707px;width:82px;text-align:center;font-size:12.5px;color:#fff">OK</div>
<div class="a" style="left:997px;top:700px;width:82px;height:26px;background:#dcdcdc;border-radius:3px"></div>
<div class="t" style="left:997px;top:707px;width:82px;text-align:center;font-size:12px;color:#3a3a3a">Cancel</div>

<!-- CANVAS -->
<!-- DIALOG -->
</body></html>
